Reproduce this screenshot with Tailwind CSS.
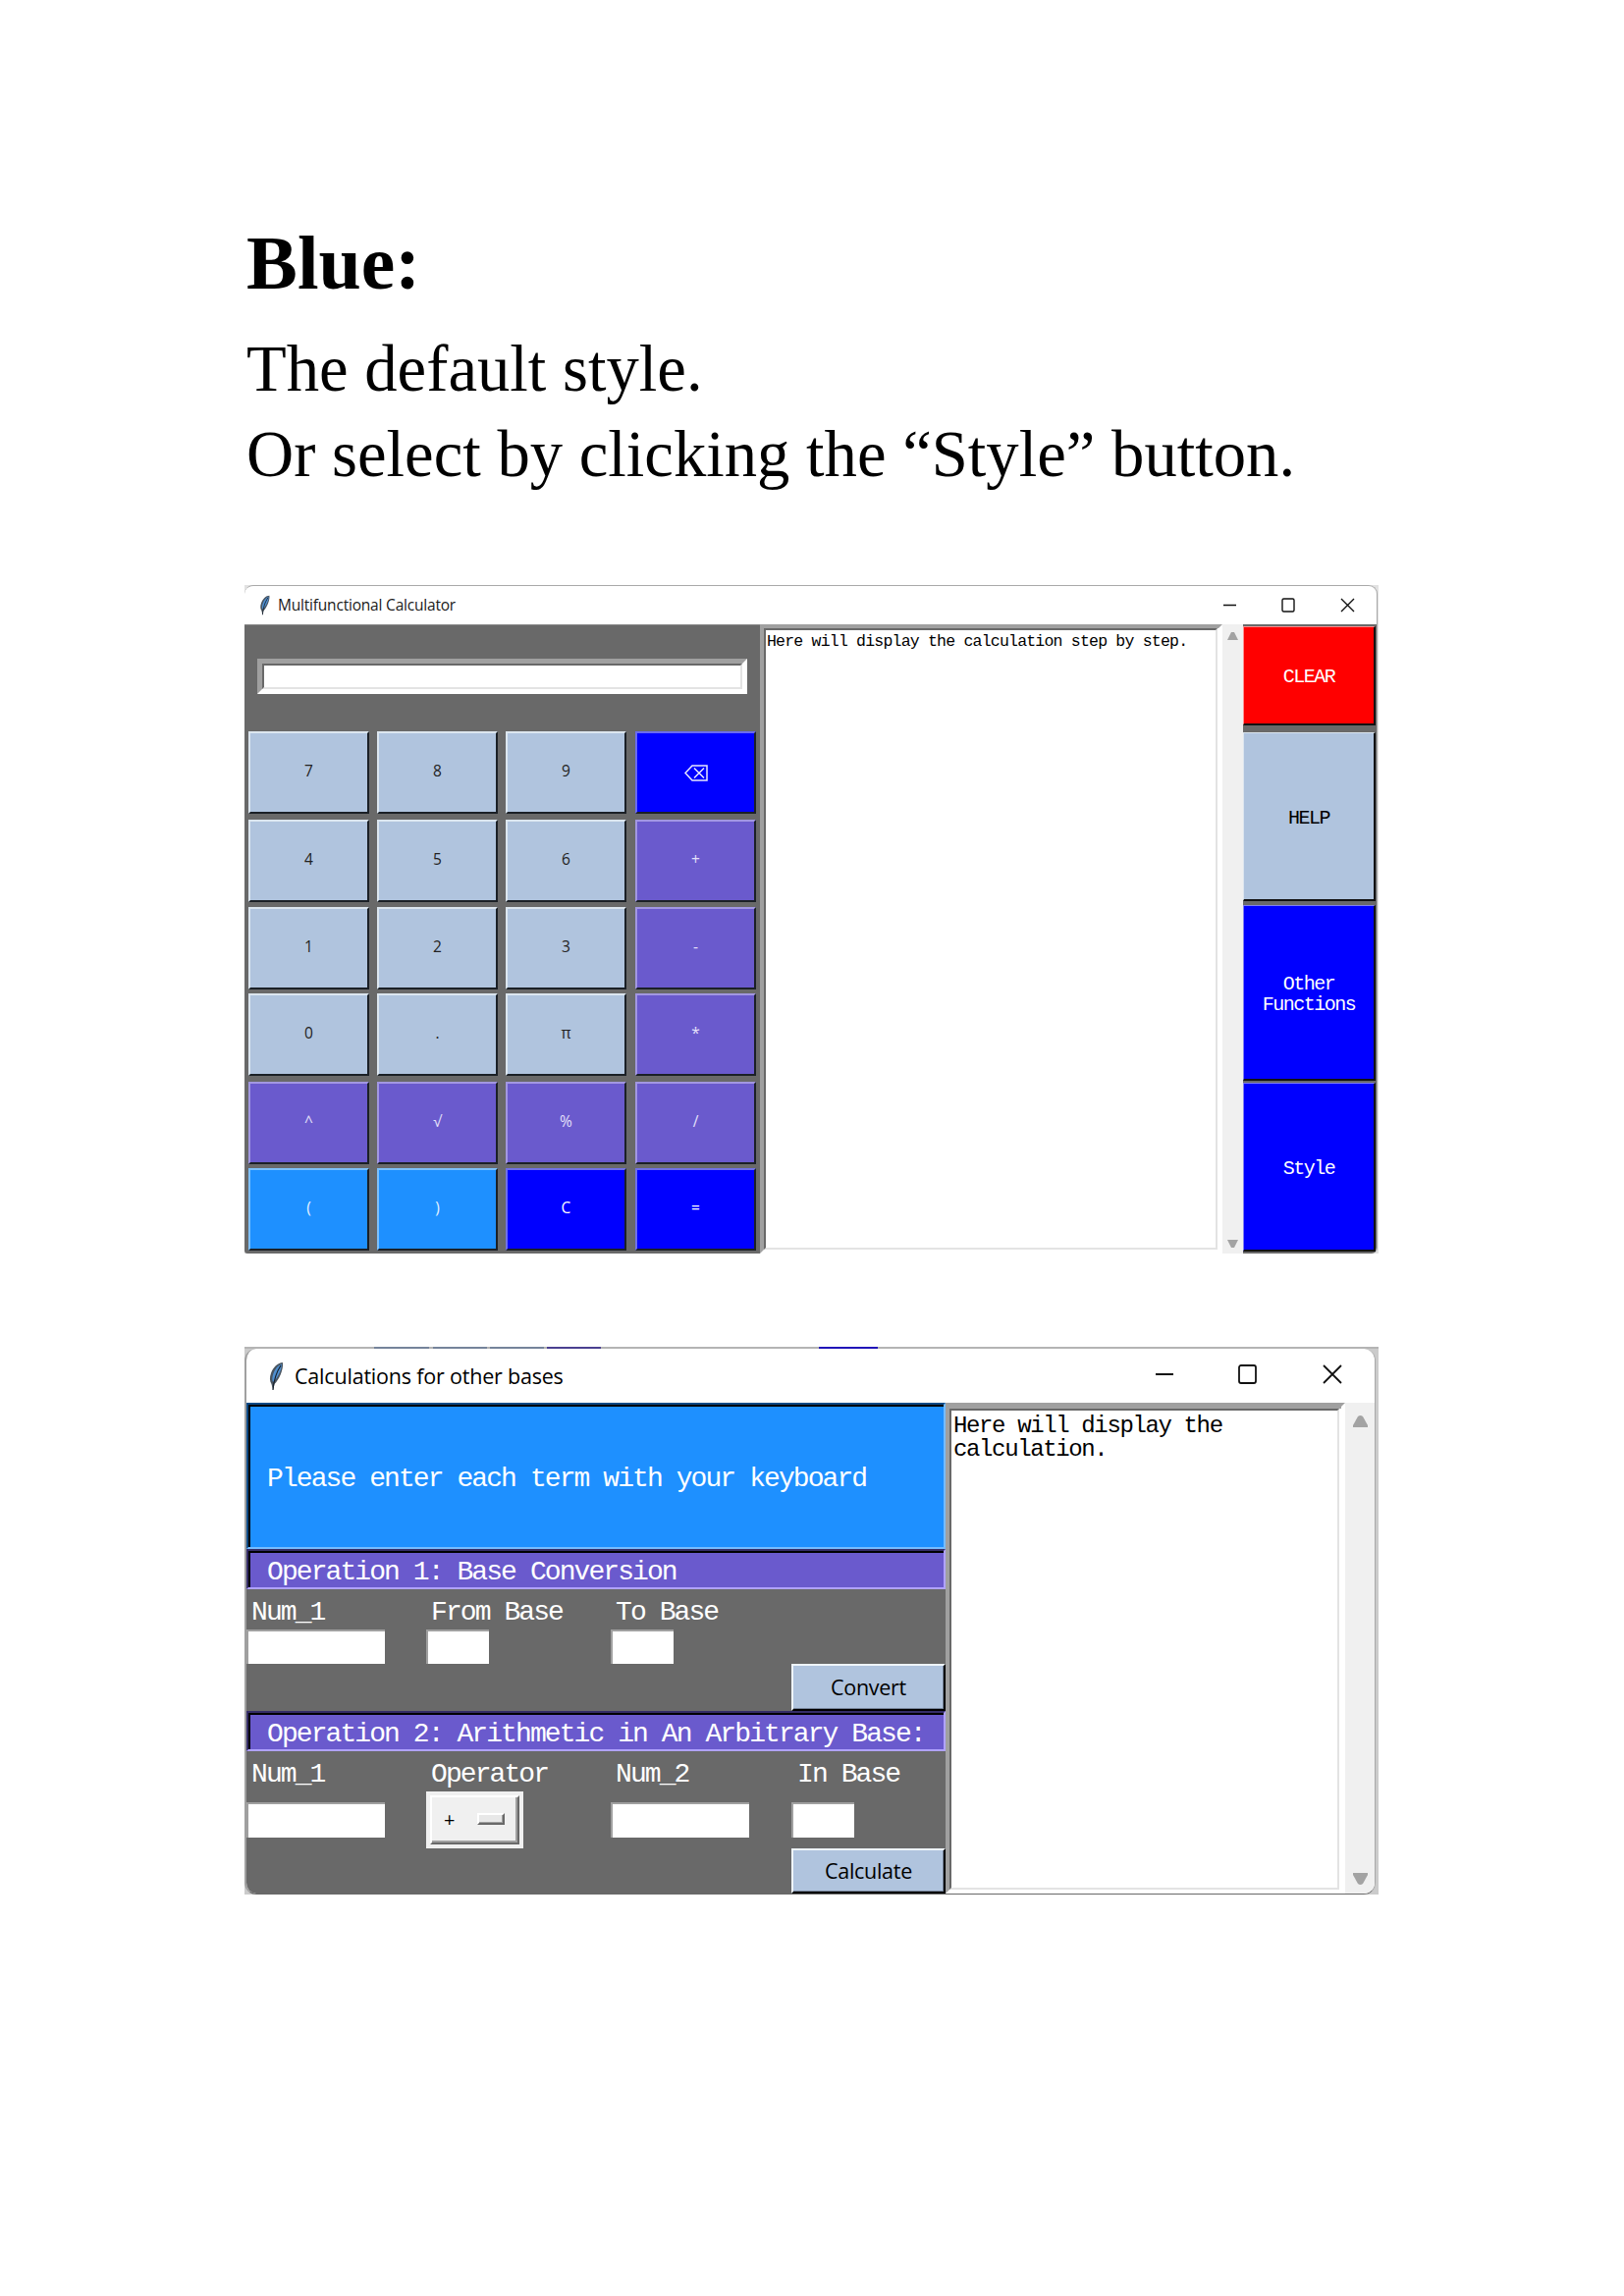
<!DOCTYPE html>
<html lang="en">
<head>
<meta charset="utf-8">
<title>Blue style</title>
<script src="https://cdn.jsdelivr.net/npm/@tailwindcss/browser@4"></script>
</head>
<body class="bg-white">
<svg class="hidden">
  <symbol id="feather" viewBox="0 0 16 30">
    <path d="M15 1C10 1 5 6 3 12C1.500 16 1.500 20 3.500 23L5 29L6.500 23C11 19 16 8 15 1Z" fill="#4a5560"/>
    <path d="M14 2.500C10 4 7 8 5.500 12C4 16 4 19 5 21C9 18 14 9 14 2.500Z" fill="#4f8fd0"/>
    <path d="M13 4C9 10 6 17 5 29" fill="none" stroke="#16202c" stroke-width="1.200"/>
  </symbol>
</svg>
<main class="flex h-[2339px] w-[1654px] flex-col pl-[249px] pt-[218px]">
  <h1 class="pl-[2px] font-['Liberation_Serif',serif] text-[77.8px] font-bold leading-[100px] text-black">Blue:</h1>
  <div class="mt-[14px] whitespace-nowrap pl-[2px] font-['Liberation_Serif',serif] text-[66.67px] leading-[87px] text-black">
    <p>The default style.</p>
    <p>Or select by clicking the “Style” button.</p>
  </div>

  <!-- Calculator window -->
  <section class="mt-[90px] h-[681px] w-[1155px] bg-[#e2e2e2]">
    <div class="flex h-[681px] w-[1154px] flex-col overflow-hidden rounded-t-[9px] rounded-br-[6px] rounded-bl-[3px] border-t border-r border-[#a9a9a9] bg-white">
      <header class="flex h-[39px] shrink-0 items-center pl-[14px]">
        <svg class="h-[21px] w-[13px]"><use href="#feather"/></svg>
        <span class="ml-[7px] w-[962px] whitespace-nowrap font-['Open_Sans',sans-serif] text-[15.5px] tracking-[-0.2px] text-[#1a1a1a]">Multifunctional Calculator</span>
        <svg class="-mt-0.5 h-[16px] w-[135px] shrink-0" viewBox="0 0 135 16" fill="none" stroke="#111" stroke-width="1.400"><path d="M1 8.500H14M121 2L134 15M134 2L121 15"/><rect x="61" y="2" width="12" height="13" rx="1.500"/></svg>
      </header>
      <div class="flex h-[641px]">
        <div class="w-[525px] shrink-0 border-t border-[#888] bg-[#696969] pl-1">
          <div class="ml-[9px] mt-[34px] h-[36px] w-[499px] border-[5px] border-t-[#a0a0a0] border-l-[#a0a0a0] border-r-white border-b-white">
            <div class="h-full border-2 border-t-[#696969] border-l-[#696969] border-r-[#e3e3e3] border-b-[#e3e3e3] bg-white"></div>
          </div>
          <div class="mt-[38px] grid grid-cols-[131px_131px_132px_124px] grid-rows-[90px_89px_88px_90px_88px_84px] font-['Open_Sans',sans-serif] text-[15.5px] text-[#222]
            [&>div]:flex [&>div]:h-[84px] [&>div]:w-[123px] [&>div]:items-center [&>div]:justify-center [&>div]:border-2 [&>div]:border-r-[#1b2026] [&>div]:border-b-[#1b2026] [&>div]:pb-[2px]">
            <div class="border-[#dce6ef] bg-[#b0c4de]">7</div>
            <div class="border-[#dce6ef] bg-[#b0c4de]">8</div>
            <div class="border-[#dce6ef] bg-[#b0c4de]">9</div>
            <div class="border-[#6a6af0] bg-[#0000ff]"><svg class="mt-0.5 h-[17px] w-[24px]" viewBox="0 0 24 17" fill="none" stroke="#e8e8ff" stroke-width="1.500"><path d="M1 8.500L8 1H23V16H8ZM10 3.500L20 13.500M20 3.500L10 13.500"/></svg></div>
            <div class="border-[#dce6ef] bg-[#b0c4de]">4</div>
            <div class="border-[#dce6ef] bg-[#b0c4de]">5</div>
            <div class="border-[#dce6ef] bg-[#b0c4de]">6</div>
            <div class="border-[#a297e2] bg-[#6a5acd] text-[#e4e0fa]">+</div>
            <div class="border-[#dce6ef] bg-[#b0c4de]">1</div>
            <div class="border-[#dce6ef] bg-[#b0c4de]">2</div>
            <div class="border-[#dce6ef] bg-[#b0c4de]">3</div>
            <div class="border-[#a297e2] bg-[#6a5acd] text-[#e4e0fa]">-</div>
            <div class="border-[#dce6ef] bg-[#b0c4de]">0</div>
            <div class="border-[#dce6ef] bg-[#b0c4de]">.</div>
            <div class="border-[#dce6ef] bg-[#b0c4de]">π</div>
            <div class="border-[#a297e2] bg-[#6a5acd] text-[#e4e0fa]">*</div>
            <div class="border-[#a297e2] bg-[#6a5acd] text-[#e4e0fa]">^</div>
            <div class="border-[#a297e2] bg-[#6a5acd] text-[#e4e0fa]">√</div>
            <div class="border-[#a297e2] bg-[#6a5acd] text-[#e4e0fa]">%</div>
            <div class="border-[#a297e2] bg-[#6a5acd] text-[#e4e0fa]">/</div>
            <div class="border-[#7dc0fa] bg-[#1e90ff] text-[#e4f2ff]">(</div>
            <div class="border-[#7dc0fa] bg-[#1e90ff] text-[#e4f2ff]">)</div>
            <div class="border-[#7070e8] bg-[#0000ff] text-white">C</div>
            <div class="border-[#7070e8] bg-[#0000ff] text-white">=</div>
          </div>
        </div>
        <div class="w-[471px] shrink-0 border-4 border-t-[#a0a0a0] border-l-[#a0a0a0] border-r-white border-b-white">
          <div class="mr-[1px] h-full w-[462px] border-2 border-t-[#696969] border-l-[#696969] border-r-[#e3e3e3] border-b-[#e3e3e3] bg-white">
            <p class="mt-[3px] whitespace-pre pl-px font-['Liberation_Mono',monospace] text-[16.5px] leading-[18px] tracking-[-0.79px] text-black">Here will display the calculation step by step.</p>
          </div>
        </div>
        <div class="flex w-[21px] shrink-0 flex-col items-center justify-between bg-[#f0f0f0] pb-[6px] pt-[8px]">
          <svg class="h-[8px] w-[11px]"><path d="M0 8L4 0H7L11 8Z" fill="#a3a3a3"/></svg>
          <svg class="h-[8px] w-[11px]"><path d="M0 0L4 8H7L11 0Z" fill="#a3a3a3"/></svg>
        </div>
        <div class="flex w-[136px] shrink-0 flex-col bg-[#696969] pt-[2px] text-center font-['Liberation_Mono',monospace] text-[20px] leading-[21px] tracking-[-1.5px] text-white
          [&>div]:flex [&>div]:w-[135px] [&>div]:items-center [&>div]:justify-center [&>div]:border-t [&>div]:border-l [&>div]:border-r-2 [&>div]:border-b-2 [&>div]:border-r-[#111] [&>div]:border-b-[#111] [&>div]:pt-[3px]">
          <div class="h-[101px] border-[#ff9090] bg-[#ff0000]">CLEAR</div>
          <div class="mt-[7px] h-[172px] border-[#dce6ef] bg-[#b0c4de] text-black">HELP</div>
          <div class="mt-[4px] h-[179px] border-[#8080f0] bg-[#0000ff]">Other<br>Functions</div>
          <div class="mt-[2px] h-[172px] border-[#8080f0] bg-[#0000ff]">Style</div>
        </div>
      </div>
    </div>
  </section>

  <!-- Base conversion window -->
  <section class="mt-[95px] h-[558px] w-[1155px] bg-[#cbcbcb]">
    <div class="flex h-[2px] bg-[#b4b4b4] pl-[132px]">
      <i class="mr-[4px] w-[56px] bg-[#75839a]"></i><i class="mr-[3px] w-[55px] bg-[#75839a]"></i><i class="mr-[3px] w-[55px] bg-[#75839a]"></i><i class="mr-[222px] w-[55px] bg-[#4a4090]"></i><i class="w-[60px] bg-[#2014b8]"></i>
    </div>
    <div class="flex h-[556px] w-[1152px] flex-col overflow-hidden rounded-[12px] border-r border-b border-l-2 border-l-[#a0a0a0] border-r-[#a9a9a9] border-b-[#696969] bg-white">
      <header class="flex h-[55px] shrink-0 items-center pl-[22px]">
        <svg class="h-[30px] w-[16px]"><use href="#feather"/></svg>
        <span class="ml-[11px] mt-px w-[876px] whitespace-nowrap font-['Open_Sans',sans-serif] text-[21.5px] tracking-[-0.2px] text-black">Calculations for other bases</span>
        <svg class="-mt-1 h-[20px] w-[191px] shrink-0" viewBox="0 0 191 20" fill="none" stroke="#111" stroke-width="1.800"><path d="M1 10H19M172 1L190 19M190 1L172 19"/><rect x="86" y="1" width="17" height="18" rx="2"/></svg>
      </header>
      <div class="flex h-[500px]">
        <div class="w-[712px] shrink-0 bg-[#696969] font-['Liberation_Mono',monospace] text-[28px] tracking-[-1.92px] text-white">
          <div class="h-[149px] border-2 border-t-[#0d4a86] border-l-[#0d4a86] border-r-[#76bcff] border-b-[#76bcff]">
            <div class="flex h-full items-center whitespace-pre border-t-2 border-l-2 border-black bg-[#1e90ff] pl-[17px] pt-[5px]">Please enter each term with your keyboard</div>
          </div>
          <div class="h-[41px] border-2 border-t-[#352d68] border-l-[#352d68] border-r-[#b0a2ff] border-b-[#b0a2ff]">
            <div class="flex h-full items-center whitespace-pre border-t-2 border-l-2 border-black bg-[#6a5acd] pl-[17px] pt-[4px] leading-none">Operation 1: Base Conversion</div>
          </div>
          <div class="grid h-[124px] grid-cols-[183px_188px_184px_157px] grid-rows-[41px_35px_48px] whitespace-pre">
            <div class="pl-[5px] leading-[47px]">Num_1</div><div class="pl-[5px] leading-[47px]">From Base</div><div class="pl-[5px] leading-[47px]">To Base</div><div></div>
            <div class="w-[141px] border-t-2 border-l-2 border-[#a0a0a0] bg-white"></div>
            <div class="w-[64px] border-t-2 border-l-2 border-[#a0a0a0] bg-white"></div>
            <div class="w-[64px] border-t-2 border-l-2 border-[#a0a0a0] bg-white"></div><div></div>
            <div class="col-start-4 flex items-center justify-center border-2 border-t-[#eef4fa] border-l-[#eef4fa] border-r-black border-b-black bg-[#b0c4de] font-['Open_Sans',sans-serif] text-[21.5px] tracking-[-0.3px] text-black shadow-[inset_-1px_-1px_0_#76849a]">Convert</div>
          </div>
          <div class="h-[41px] border-2 border-t-[#352d68] border-l-[#352d68] border-r-[#b0a2ff] border-b-[#b0a2ff]">
            <div class="flex h-full items-center whitespace-pre border-t-2 border-l-2 border-black bg-[#6a5acd] pl-[17px] pt-[4px] leading-none">Operation 2: Arithmetic in An Arbitrary Base:</div>
          </div>
          <div class="grid h-[145px] grid-cols-[183px_188px_184px_157px] grid-rows-[41px_58px_46px] items-center">
            <div class="pl-[5px] pt-[5px] leading-[41px]">Num_1</div><div class="pl-[5px] pt-[5px] leading-[41px]">Operator</div><div class="pl-[5px] pt-[5px] leading-[41px]">Num_2</div><div class="pl-[6px] pt-[5px] leading-[41px]">In Base</div>
            <div class="h-[36px] w-[141px] border-t-2 border-l-2 border-[#a0a0a0] bg-white"></div>
            <div class="h-[58px] w-[99px] bg-[#f0f0f0] p-[4px]">
              <div class="flex h-full items-center border-2 border-t-white border-l-white border-r-[#696969] border-b-[#696969] pl-[12px] shadow-[inset_-2px_-2px_0_#a0a0a0]">
                <span class="w-[34px] font-['Open_Sans',sans-serif] text-[20px] leading-none text-black">+</span>
                <span class="-mt-[3px] h-[12px] w-[28px] border-2 border-t-white border-l-white border-r-[#696969] border-b-[#696969] bg-[#e8e8e8] shadow-[inset_-1px_-1px_0_#a0a0a0]"></span>
              </div>
            </div>
            <div class="h-[36px] w-[141px] border-t-2 border-l-2 border-[#a0a0a0] bg-white"></div>
            <div class="h-[36px] w-[64px] border-t-2 border-l-2 border-[#a0a0a0] bg-white"></div>
            <div class="col-start-4 flex h-full items-center justify-center border-2 border-t-[#eef4fa] border-l-[#eef4fa] border-r-black border-b-black bg-[#b0c4de] font-['Open_Sans',sans-serif] text-[21.5px] tracking-[-0.3px] text-black shadow-[inset_-1px_-1px_0_#76849a]">Calculate</div>
          </div>
        </div>
        <div class="w-[407px] shrink-0 border-4 border-t-[#a0a0a0] border-l-[#a0a0a0] border-r-white border-b-white pt-[2px] shadow-[inset_0_2px_0_#a0a0a0]">
          <div class="h-full w-[397px] border-2 border-t-[#696969] border-l-[#696969] border-r-[#e3e3e3] border-b-[#e3e3e3] bg-white">
            <p class="mt-[4px] whitespace-pre pl-[2px] font-['Liberation_Mono',monospace] text-[24px] leading-[24px] tracking-[-1.37px] text-black">Here will display the
calculation.</p>
          </div>
        </div>
        <div class="flex w-[30px] shrink-0 flex-col items-center justify-between bg-[#f0f0f0] pb-[9px] pt-[13px]">
          <svg class="h-[12px] w-[15px]"><path d="M0 12V10L5 1Q7.500 -1 10 1L15 10V12Z" fill="#a3a3a3"/></svg>
          <svg class="h-[12px] w-[15px]"><path d="M0 0V2L5 11Q7.500 13 10 11L15 2V0Z" fill="#a3a3a3"/></svg>
        </div>
      </div>
    </div>
  </section>
</main>
</body>
</html>
